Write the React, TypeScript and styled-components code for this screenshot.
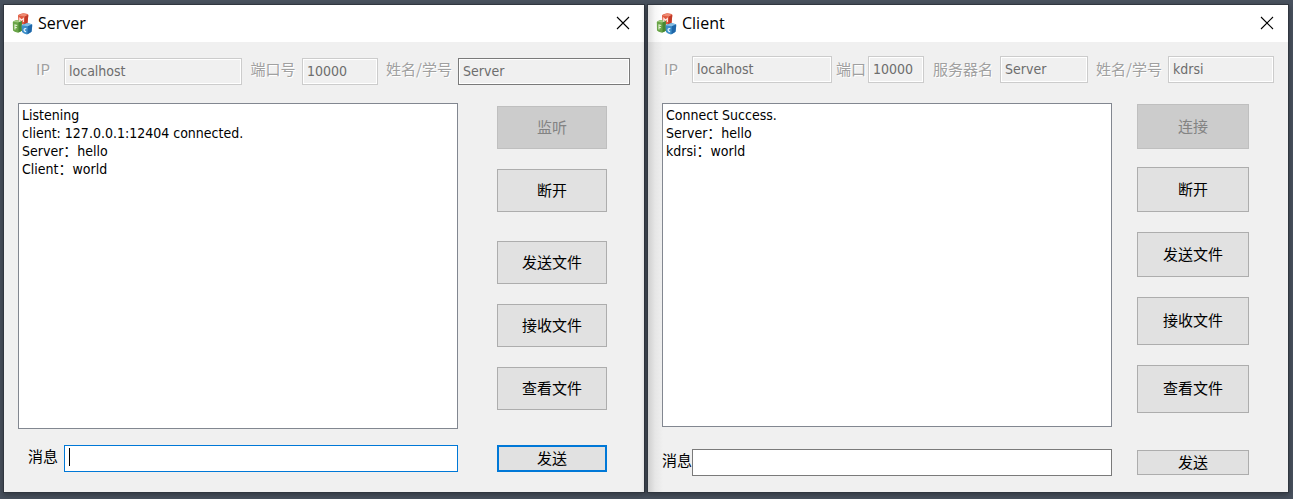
import React from "react";
import styled, { createGlobalStyle, css } from "styled-components";

const GlobalStyle = createGlobalStyle`
  *, *::before, *::after { box-sizing: border-box; }
  body {
    margin: 0;
    min-height: 100vh;
    background: #49525f;
    color: #000;
    font-family: "DejaVu Sans Condensed", "Noto Sans CJK SC", sans-serif;
    font-size: 14px;
  }
  input, button, textarea { font: inherit; }
`;

const Desktop = styled.main`
  display: grid;
  grid-template-columns: minmax(0, 1fr) minmax(0, 1fr);
  align-items: start;
  gap: 4px;
  padding: 5px 5px 7px 4px;
`;

const Frame = styled.section<{ $shaded?: boolean }>`
  background: #f0f0f0;
  box-shadow: 0 0 0 1px #30363f, 0 2px 6px 1px rgba(0, 0, 0, 0.35);
  ${(p) =>
    p.$shaded &&
    css`
      background: linear-gradient(to right, #cfcfcf, #e6e6e6 7px, #f0f0f0 15px);
    `}
`;

const TitleBar = styled.header<{ $shaded?: boolean }>`
  display: flex;
  align-items: center;
  height: 37px;
  padding: 0 13px 0 8px;
  gap: 4px;
  background: ${(p) =>
    p.$shaded ? "linear-gradient(to right, #dedede, #f6f6f6 7px, #fff 15px)" : "#fff"};
`;

const Title = styled.h1`
  flex: 1;
  margin: 0;
  padding-bottom: 2px;
  font-family: "Open Sans", "Noto Sans", sans-serif;
  font-size: 16px;
  font-weight: 400;
  line-height: 20px;
`;

const CloseButton = styled.button`
  display: flex;
  padding: 0 0 2px;
  border: 0;
  background: none;
`;

const Fields = styled.div<{ $columns: string; $top: number }>`
  display: grid;
  grid-template-columns: ${(p) => p.$columns};
  align-items: center;
  padding: ${(p) => p.$top}px 14px 0 16px;
`;

const FieldLabel = styled.label<{ $lift: number }>`
  padding-left: 2px;
  padding-bottom: ${(p) => p.$lift}px;
  color: #a0a0a0;
  font-family: "Noto Sans CJK SC", sans-serif;
  font-size: 15px;
  line-height: 22px;
  text-align: center;
  text-shadow: 1px 1px 0 #fff;
  white-space: nowrap;

  &:first-child {
    padding-left: 0;
    padding-right: 14px;
    text-align: right;
  }
`;

const TextField = styled.input<{ $strong?: boolean; $focused?: boolean }>`
  width: 100%;
  min-width: 0;
  height: 27px;
  padding: 0 4px 2px;
  border: 1px solid ${(p) => (p.$focused ? "#0078d7" : p.$strong ? "#7a7a7a" : "#ccc")};
  border-radius: 0;
  outline: 0;
  background: #fff;
  color: #000;
  caret-color: transparent;

  &:disabled,
  &:read-only {
    background: #f0f0f0;
    box-shadow: inset 0 0 0 1px #fff;
    color: #6d6d6d;
  }
`;

const Content = styled.div<{ $columns: string; $top: number; $right: number; $gap: number }>`
  display: grid;
  grid-template-columns: ${(p) => p.$columns};
  column-gap: ${(p) => p.$gap}px;
  padding: ${(p) => p.$top}px ${(p) => p.$right}px 0 14px;
`;

const Log = styled.textarea<{ $height: number }>`
  display: block;
  width: 100%;
  height: ${(p) => p.$height}px;
  padding: 2px 3px;
  border: 1px solid #828790;
  border-radius: 0;
  outline: 0;
  resize: none;
  background: #fff;
  color: #000;
  line-height: 18px;
`;

const Actions = styled.div<{ $top: number }>`
  display: flex;
  flex-direction: column;
  padding-top: ${(p) => p.$top}px;
`;

const PushButton = styled.button<{ $height: number; $space?: number; $primary?: boolean }>`
  width: 100%;
  height: ${(p) => p.$height}px;
  margin-top: ${(p) => p.$space ?? 0}px;
  padding: 0 0 2px;
  border: ${(p) => (p.$primary ? "2px solid #0078d7" : "1px solid #adadad")};
  border-radius: 0;
  background: #e1e1e1;
  color: #000;
  font-family: "Noto Sans CJK SC", sans-serif;
  font-size: 15px;
  line-height: 20px;

  &:disabled {
    border-color: #bfbfbf;
    background: #ccc;
    color: #838383;
  }
`;

const MessageRow = styled(Content).attrs({ as: "form" })<{ $bottom: number }>`
  align-items: center;
  padding-bottom: ${(p) => p.$bottom}px;
`;

const MessageField = styled.div<{ $label: number }>`
  display: grid;
  grid-template-columns: ${(p) => p.$label}px minmax(0, 1fr);
  align-items: center;
`;

const MessageLabel = styled.label<{ $inset: number }>`
  padding-left: ${(p) => p.$inset}px;
  padding-bottom: 5px;
  font-family: "Noto Sans CJK SC", sans-serif;
  font-size: 15px;
  line-height: 20px;
  white-space: nowrap;
`;

const CaretBox = styled.div<{ $active?: boolean }>`
  position: relative;
  display: flex;
  ${(p) =>
    p.$active &&
    css`
      &::after {
        content: "";
        position: absolute;
        left: 5px;
        top: 3px;
        width: 1px;
        height: 18px;
        background: #000;
      }
    `}
`;

function AppIcon() {
  return (
    <svg width="22" height="22" viewBox="0 0 22 22" aria-hidden="true">
      <path d="M6 2.500Q6 1.500 10 .5Q12 0 15.500 1Q16.500 1.500 16.300 3L15.500 9.500Q15.500 10.500 11 11.500L6.500 10Z" fill="#e05a40" />
      <path d="M6.200 2.500 10.500 .6 16 1.800 13 3.500Z" fill="#ee8a72" />
      <path d="M13 3.500 16.300 1.800 15.500 10 12.200 11.300Z" fill="#c03a28" />
      <path d="M.8 9Q1 8 4.500 7Q6 6.600 9.500 7.800L10 17.500Q9.500 18.500 6 19.800Q2 19 1 17.500Z" fill="#6aa548" />
      <path d="M1 8.800 5 7 9.800 8 6.500 9.500Z" fill="#9fca7e" />
      <path d="M6.500 9.500 9.800 8 9.800 17.800 6.500 19.600Z" fill="#478732" />
      <path d="M9.500 12.500Q10 11.500 14 10.500Q16 10 20 11.200L20.300 13 19.500 18.500Q19 19.500 15 21.500Q11.500 20.500 10 19Z" fill="#3c8ec9" />
      <path d="M9.700 12.300 14.500 10.400 20 11.400 15.800 13.200Z" fill="#86bfe4" />
      <path d="M15.800 13.200 20.200 11.600 19.500 18.800 15.500 21.200Z" fill="#1f66a8" />
      <path d="M7.800 8.800V5.300L9.600 7.200 11.400 5.500V9" fill="none" stroke="#ffe9e2" strokeWidth="1.100" />
      <path d="M3 16.500V12L5.200 12.500M3 14.200 4.800 14.600" fill="none" stroke="#e5f3d8" strokeWidth="1.100" />
      <path d="M14.300 15.800C11.600 14.600 11.200 18.200 14.100 18.700" fill="none" stroke="#e3f3ff" strokeWidth="1.200" />
    </svg>
  );
}

function TitleRow({ name, shaded }: { name: string; shaded?: boolean }) {
  return (
    <TitleBar $shaded={shaded}>
      <AppIcon />
      <Title>{name}</Title>
      <CloseButton type="button" aria-label="Close">
        <svg width="16" height="16" viewBox="0 0 16 16" aria-hidden="true">
          <path d="M2 2 14 14M14 2 2 14" stroke="#000" strokeWidth="1.100" />
        </svg>
      </CloseButton>
    </TitleBar>
  );
}

type Field = { label: string; value: string; strong?: boolean };
type Action = { label: string; height: number; space?: number; disabled?: boolean };

interface DialogProps {
  id: string;
  name: string;
  shaded?: boolean;
  fields: Field[];
  fieldColumns: string;
  fieldsTop: number;
  labelLift: number;
  columns: string;
  gap: number;
  right: number;
  logTop: number;
  logHeight: number;
  log: string;
  actionsTop: number;
  actions: Action[];
  messageTop: number;
  messageBottom: number;
  labelWidth: number;
  labelInset: number;
  sendHeight: number;
  active?: boolean;
}

function ChatDialog(p: DialogProps) {
  return (
    <Frame $shaded={p.shaded}>
      <TitleRow name={p.name} shaded={p.shaded} />
      <Fields $columns={p.fieldColumns} $top={p.fieldsTop}>
        {p.fields.map((f, i) => (
          <React.Fragment key={f.label}>
            <FieldLabel htmlFor={`${p.id}-${i}`} $lift={p.labelLift}>
              {f.label}
            </FieldLabel>
            <TextField
              id={`${p.id}-${i}`}
              defaultValue={f.value}
              $strong={f.strong}
              readOnly={f.strong}
              disabled={!f.strong}
            />
          </React.Fragment>
        ))}
      </Fields>
      <Content $columns={p.columns} $top={p.logTop} $right={p.right} $gap={p.gap}>
        <Log aria-label={`${p.name} log`} readOnly $height={p.logHeight} defaultValue={p.log} />
        <Actions $top={p.actionsTop}>
          {p.actions.map((a) => (
            <PushButton key={a.label} type="button" $height={a.height} $space={a.space} disabled={a.disabled}>
              {a.label}
            </PushButton>
          ))}
        </Actions>
      </Content>
      <MessageRow
        $columns={p.columns}
        $top={p.messageTop}
        $right={p.right}
        $gap={p.gap}
        $bottom={p.messageBottom}
        onSubmit={(e: React.FormEvent) => e.preventDefault()}
      >
        <MessageField $label={p.labelWidth}>
          <MessageLabel htmlFor={`${p.id}-message`} $inset={p.labelInset}>
            消息
          </MessageLabel>
          <CaretBox $active={p.active}>
            <TextField id={`${p.id}-message`} $strong $focused={p.active} />
          </CaretBox>
        </MessageField>
        <PushButton type="submit" $height={p.sendHeight} $primary={p.active}>
          发送
        </PushButton>
      </MessageRow>
    </Frame>
  );
}

export default function App() {
  return (
    <>
      <GlobalStyle />
      <Desktop>
        <ChatDialog
          id="server"
          name="Server"
          fields={[
            { label: "IP", value: "localhost" },
            { label: "端口号", value: "10000" },
            { label: "姓名/学号", value: "Server", strong: true },
          ]}
          fieldColumns="44px minmax(0, 178fr) 60px minmax(0, 76fr) 80px minmax(0, 172fr)"
          fieldsTop={16}
          labelLift={5}
          columns="minmax(0, 1fr) 110px"
          gap={39}
          right={37}
          logTop={18}
          logHeight={326}
          log={"Listening\nclient: 127.0.0.1:12404 connected.\nServer：hello\nClient：world"}
          actionsTop={3}
          actions={[
            { label: "监听", height: 43, disabled: true },
            { label: "断开", height: 43, space: 20 },
            { label: "发送文件", height: 43, space: 29 },
            { label: "接收文件", height: 43, space: 20 },
            { label: "查看文件", height: 43, space: 20 },
          ]}
          messageTop={16}
          messageBottom={20}
          labelWidth={46}
          labelInset={10}
          sendHeight={27}
          active
        />
        <ChatDialog
          id="client"
          name="Client"
          shaded
          fields={[
            { label: "IP", value: "localhost" },
            { label: "端口", value: "10000" },
            { label: "服务器名", value: "Server" },
            { label: "姓名/学号", value: "kdrsi" },
          ]}
          fieldColumns="28px minmax(0, 140fr) 36px minmax(0, 56fr) 76px minmax(0, 88fr) 80px minmax(0, 106fr)"
          fieldsTop={14}
          labelLift={2}
          columns="minmax(0, 1fr) 112px"
          gap={25}
          right={39}
          logTop={20}
          logHeight={324}
          log={"Connect Success.\nServer：hello\nkdrsi：world"}
          actionsTop={1}
          actions={[
            { label: "连接", height: 45, disabled: true },
            { label: "断开", height: 45, space: 18 },
            { label: "发送文件", height: 45, space: 20 },
            { label: "接收文件", height: 48, space: 20 },
            { label: "查看文件", height: 48, space: 20 },
          ]}
          messageTop={22}
          messageBottom={16}
          labelWidth={30}
          labelInset={0}
          sendHeight={25}
        />
      </Desktop>
    </>
  );
}
